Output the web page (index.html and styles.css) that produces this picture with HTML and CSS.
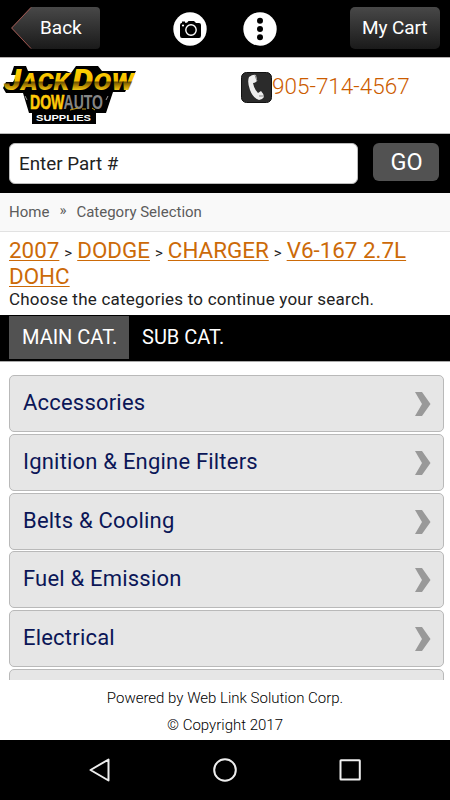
FILE: index.html
```html
<!DOCTYPE html>
<html lang="en">
<head>
<meta charset="utf-8">
<title>Category Selection</title>
<link rel="stylesheet" href="styles.css">
</head>
<body>
<header class="topbar">
  <a class="back"><svg class="back-shape" width="90" height="42" viewBox="0 0 90 42"><defs><linearGradient id="bg" x1="0" y1="0" x2="0" y2="1"><stop offset="0" stop-color="#484848"/><stop offset="1" stop-color="#1a1a1a"/></linearGradient></defs><path d="M20 0H85Q89 0 89 4V38Q89 42 85 42H20L0 21Z" fill="url(#bg)"/><path d="M20 .5L.7 21L20 41.5" fill="none" stroke="#a0544e"/></svg><span>Back</span></a>
  <svg class="camera" width="34" height="34" viewBox="0 0 34 34"><circle cx="17" cy="17" r="16.7" fill="#fff"/><path d="M9 9.5H12V10.7H14L15.5 9H21L23 11H26Q28 11 28 13V23.5Q28 26 26 26H9Q7 26 7 23.5V13Q7 11 9 10.7Z" fill="#000"/><circle cx="18" cy="18" r="5.2" fill="none" stroke="#fff" stroke-width="1.4"/><circle cx="10" cy="13.5" r="1.1" fill="#fff"/></svg>
  <svg class="dots" width="34" height="34" viewBox="0 0 34 34"><circle cx="17" cy="17" r="16.7" fill="#fff"/><circle cx="17" cy="8.7" r="3"/><circle cx="17" cy="17" r="3"/><circle cx="17" cy="25.3" r="3"/></svg>
  <a class="cart"><span>My Cart</span></a>
</header>
<section class="brand">
  <svg class="logo" width="150" height="75" viewBox="0 0 150 75">
    <defs><linearGradient id="gold" gradientUnits="userSpaceOnUse" x1="0" y1="10" x2="0" y2="33"><stop offset="0" stop-color="#ffd400"/><stop offset=".55" stop-color="#f5bd00"/><stop offset=".62" stop-color="#705400"/><stop offset=".78" stop-color="#b88c00"/><stop offset="1" stop-color="#ffd71a"/></linearGradient></defs>
    <path d="M14 8H26L28 13H66L71 15L76 8H98L102 13H136L125 34H113L106 55H96V66H32V55H29L23 35H6L3 30L6 24H13L17 17H11Z" fill="#000"/>
    <text class="logo-title" x="4" y="32" fill="url(#gold)" textLength="65" lengthAdjust="spacingAndGlyphs"><tspan class="big">J</tspan>ACK</text>
    <text class="logo-title" x="72" y="32" fill="url(#gold)" textLength="62" lengthAdjust="spacingAndGlyphs"><tspan class="big">D</tspan>OW</text>
    <text class="logo-sub" x="30" y="51" font-size="21" textLength="73" lengthAdjust="spacingAndGlyphs"><tspan fill="#ffca08" stroke="#ffca08" stroke-width=".6">DOW</tspan><tspan fill="#858585">AUTO</tspan></text>
    <path d="M70 52L78 50M82 51H86M92 50L95 52" stroke="#caa21a" fill="none"/>
    <path d="M25 38L27 42M108 38L106 42" stroke="#999" fill="none"/>
    <text class="logo-sub" x="36" y="63.3" font-size="9.5" fill="#fff" textLength="55" lengthAdjust="spacingAndGlyphs">SUPPLIES</text>
  </svg>
  <a class="phone"><svg width="31" height="31" viewBox="0 0 31 31"><rect x=".5" y=".5" width="30" height="30" rx="5" fill="#2b2b2b" stroke="#111"/><path d="M8 5Q12 2 15 3L16 9Q14 11 12 11Q13 17 17 21L20 19Q23 22 23 25Q21 28 18 28Q12 26 9 18Q6 10 8 5Z" fill="#eee"/><path d="M14 3L16 9M18 24L23 24" stroke="#888"/></svg><span>905-714-4567</span></a>
</section>
<form class="search"><div class="field"><span>Enter Part #</span></div><a class="go"><span>GO</span></a></form>
<nav class="crumbs"><span class="c-home">Home</span><span class="c-sep">»</span><span class="c-cat">Category Selection</span></nav>
<section class="vehicle">
  <p class="path"><a>2007</a><i>&gt;</i><a>DODGE</a><i>&gt;</i><a>CHARGER</a><i>&gt;</i><a>V6-167 2.7L<br>DOHC</a></p>
  <p class="hint">Choose the categories to continue your search.</p>
</section>
<nav class="tabs"><a class="tab active"><span>MAIN CAT.</span></a><a class="tab"><span>SUB CAT.</span></a></nav>
<main class="list">
  <a class="item"><span>Accessories</span><svg class="chev" width="16" height="24" viewBox="0 0 16 24"><path d="M0 0H7L15.5 12L7 24H0L7 12Z"/></svg></a>
  <a class="item"><span>Ignition &amp; Engine Filters</span><svg class="chev" width="16" height="24" viewBox="0 0 16 24"><path d="M0 0H7L15.5 12L7 24H0L7 12Z"/></svg></a>
  <a class="item"><span>Belts &amp; Cooling</span><svg class="chev" width="16" height="24" viewBox="0 0 16 24"><path d="M0 0H7L15.5 12L7 24H0L7 12Z"/></svg></a>
  <a class="item"><span>Fuel &amp; Emission</span><svg class="chev" width="16" height="24" viewBox="0 0 16 24"><path d="M0 0H7L15.5 12L7 24H0L7 12Z"/></svg></a>
  <a class="item"><span>Electrical</span><svg class="chev" width="16" height="24" viewBox="0 0 16 24"><path d="M0 0H7L15.5 12L7 24H0L7 12Z"/></svg></a>
  <a class="item"></a>
</main>
<footer class="credits"><p class="powered">Powered by Web Link Solution Corp.</p><p class="copy">© Copyright 2017</p></footer>
<div class="sysnav">
  <svg width="24" height="26" viewBox="0 0 24 26"><path d="M20.5 2.5V23.5L2.5 13Z"/></svg>
  <svg width="26" height="26" viewBox="0 0 26 26"><circle cx="13" cy="13" r="10.8"/></svg>
  <svg width="24" height="26" viewBox="0 0 24 26"><rect x="2.5" y="3.2" width="19.3" height="19.3" rx=".5"/></svg>
</div>
</body>
</html>
```
FILE: styles.css
```css
* { box-sizing: border-box; }
body { margin: 0; width: 450px; height: 800px; overflow: hidden; background: #fff; font-family: Roboto, sans-serif; display: flex; flex-direction: column; }
p { margin: 0; }
svg { display: block; flex: none; }
.topbar { height: 58px; background: #000; border-bottom: 1px solid #b5b0b0; display: flex; align-items: flex-start; padding: 7px 0 0 11px; color: #fff; font-size: 19px; line-height: 41px; }
.back { display: grid; width: 90px; height: 42px; }
.back > * { grid-area: 1 / 1; }
.back span { padding-left: 29px; }
.camera { margin: 5px 0 0 72px; }
.dots { margin: 5px 0 0 36px; }
.cart { margin-left: 73px; width: 90px; height: 42px; border-radius: 5px; background: linear-gradient(#484848, #1a1a1a); padding-left: 12px; white-space: nowrap; letter-spacing: -.1px; }
.brand { height: 76px; border-bottom: 1px solid #bbb; display: flex; }
.logo-title { font-family: Roboto, sans-serif; font-size: 24px; font-weight: 900; font-style: italic; }
.logo-title .big { font-size: 30px; }
.logo-sub { font-family: "Liberation Sans", sans-serif; font-weight: bold; }
.phone { display: flex; margin: 14px 0 0 91px; color: #cc5c00; font-weight: 300; font-size: 22.5px; line-height: 29px; }
.search { height: 59px; background: #000; display: flex; padding: 9px 0 0 9px; }
.field { width: 349px; height: 41px; background: #fff; border: 1px solid #bbb; border-radius: 6px; padding-left: 9px; font-size: 18.8px; line-height: 40px; color: #222; }
.go { margin-left: 15px; width: 66px; height: 38px; border-radius: 6px; background: #525252; color: #fff; font-size: 23.5px; line-height: 38px; text-align: center; padding-left: 1px; }
.crumbs { height: 39px; background: #f9f9f9; border-bottom: 1px solid #e2e2e2; padding-left: 9px; display: flex; color: #5c5c5c; font-size: 15px; line-height: 38px; }
.c-sep { margin: -2px 10px 0; }
.vehicle { height: 83px; padding: 5px 9px 0; color: #222; }
.path { font-size: 22.4px; line-height: 26px; height: 52px; color: #cc6a08; }
.path a { text-decoration: underline; text-decoration-thickness: 1px; text-underline-offset: 2px; }
.path i { font-style: normal; font-size: 15px; line-height: 1; color: #222; margin: 0 5px; }
.hint { font-size: 17px; line-height: 21px; letter-spacing: .22px; }
.tabs { height: 47px; background: #000; border-bottom: 1px solid #aaa; padding: 1px 0 0 9px; display: flex; color: #fff; font-size: 20px; line-height: 42px; white-space: nowrap; }
.tab { height: 43px; padding: 0 13px; }
.active { width: 120px; background: #525252; }
.list { height: 318px; padding: 13px 6.5px 0 9px; display: flex; flex-direction: column; gap: 1.8px; overflow: hidden; }
.item { height: 57px; flex: none; border: 1px solid #b9b9b9; border-radius: 5px; background: #e6e6e6; color: #0b1657; font-size: 22px; line-height: 53px; padding: 0 12px 0 13px; display: flex; justify-content: space-between; letter-spacing: .2px; }
.chev { margin-top: 16px; fill: #999; }
.credits { height: 60px; text-align: center; font-size: 15px; line-height: 26px; padding-top: 5px; color: #000; font-weight: 300; }
.copy { padding-top: .5px; }
.sysnav { height: 60px; background: #000; display: flex; align-items: center; justify-content: space-between; padding: 0 88px; }
.sysnav svg { fill: none; stroke: #eee; stroke-width: 2; stroke-linejoin: round; }
```
